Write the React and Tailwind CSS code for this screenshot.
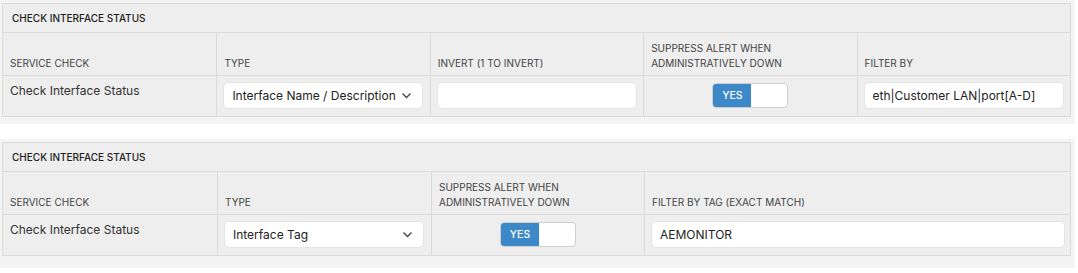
const Chevron = () => (
  <svg width="11" height="7" viewBox="0 0 11 7" fill="none" stroke="#444" strokeWidth="1.3">
    <polyline points="1.5,1.5 5.5,5.5 9.5,1.5" />
  </svg>
);

const SelectBox = ({ value }) => (
  <div className="flex h-[27px] w-[200px] items-center justify-between rounded-[5px] border border-[#e4e4e4] bg-white pl-[8px] pr-[10px] text-[12px] whitespace-nowrap text-[#222]">
    <span>{value}</span>
    <Chevron />
  </div>
);

const TextBox = ({ value = "", className = "w-[200px]" }) => (
  <div className={`flex h-[27px] items-center rounded-[5px] border border-[#e4e4e4] bg-white px-[8px] text-[12px] whitespace-nowrap text-[#222] ${className}`}>
    {value}
  </div>
);

const Toggle = () => (
  <div className="flex h-[25px] w-[76px] overflow-hidden rounded-[4px] border border-[#cfcfcf] bg-white">
    <div className="flex w-[38px] items-center justify-center bg-[#3d88c9] text-[10.5px] font-medium text-white">
      YES
    </div>
  </div>
);

const Panel = ({ cols, headers, cells, className }) => (
  <div className={`w-[1075px] bg-[#f4f4f4] pl-[2px] pr-[4px] pt-[3px] ${className}`}>
    <div className="border border-[#dadada] bg-[#eeeeee] text-[#333]">
      <div className="flex h-[28px] items-center px-[9px] text-[10px] font-medium text-[#222]">
        CHECK INTERFACE STATUS
      </div>
      <div className={`grid border-t border-[#dadada] ${cols}`}>
        {headers.map((h, i) => (
          <div
            key={i}
            className={`flex h-[42px] items-end px-[7px] pb-[4px] text-[10px] leading-[15px] text-[#444] ${i ? "border-l border-[#dadada]" : ""}`}
          >
            <span>{h}</span>
          </div>
        ))}
      </div>
      <div className={`grid border-t border-[#dadada] ${cols}`}>
        {cells.map((c, i) => (
          <div
            key={i}
            className={`h-[40px] px-[6px] pt-[6px] ${i ? "border-l border-[#dadada]" : ""}`}
          >
            {c}
          </div>
        ))}
      </div>
    </div>
  </div>
);

export default function App() {
  return (
    <div className="min-h-[273px] bg-white font-['Inter',sans-serif]">
      <Panel
        className="pb-[7px]"
        cols="grid-cols-5"
        headers={[
          "SERVICE CHECK",
          "TYPE",
          "INVERT (1 TO INVERT)",
          <>SUPPRESS ALERT WHEN<br />ADMINISTRATIVELY DOWN</>,
          "FILTER BY",
        ]}
        cells={[
          <div className="pl-[1px] pt-[1px] text-[12px] leading-[16px]">Check Interface Status</div>,
          <SelectBox value="Interface Name / Description" />,
          <TextBox />,
          <div className="flex justify-center pt-[1px]"><Toggle /></div>,
          <TextBox value="eth|Customer LAN|port[A-D]" />,
        ]}
      />
      <Panel
        className="mt-[15px] pb-[12px]"
        cols="grid-cols-[214px_214px_213px_1fr]"
        headers={[
          "SERVICE CHECK",
          "TYPE",
          <>SUPPRESS ALERT WHEN<br />ADMINISTRATIVELY DOWN</>,
          "FILTER BY TAG (EXACT MATCH)",
        ]}
        cells={[
          <div className="pl-[1px] pt-[1px] text-[12px] leading-[16px]">Check Interface Status</div>,
          <SelectBox value="Interface Tag" />,
          <div className="flex justify-center pt-[1px]"><Toggle /></div>,
          <TextBox value="AEMONITOR" className="w-[414px]" />,
        ]}
      />
    </div>
  );
}
